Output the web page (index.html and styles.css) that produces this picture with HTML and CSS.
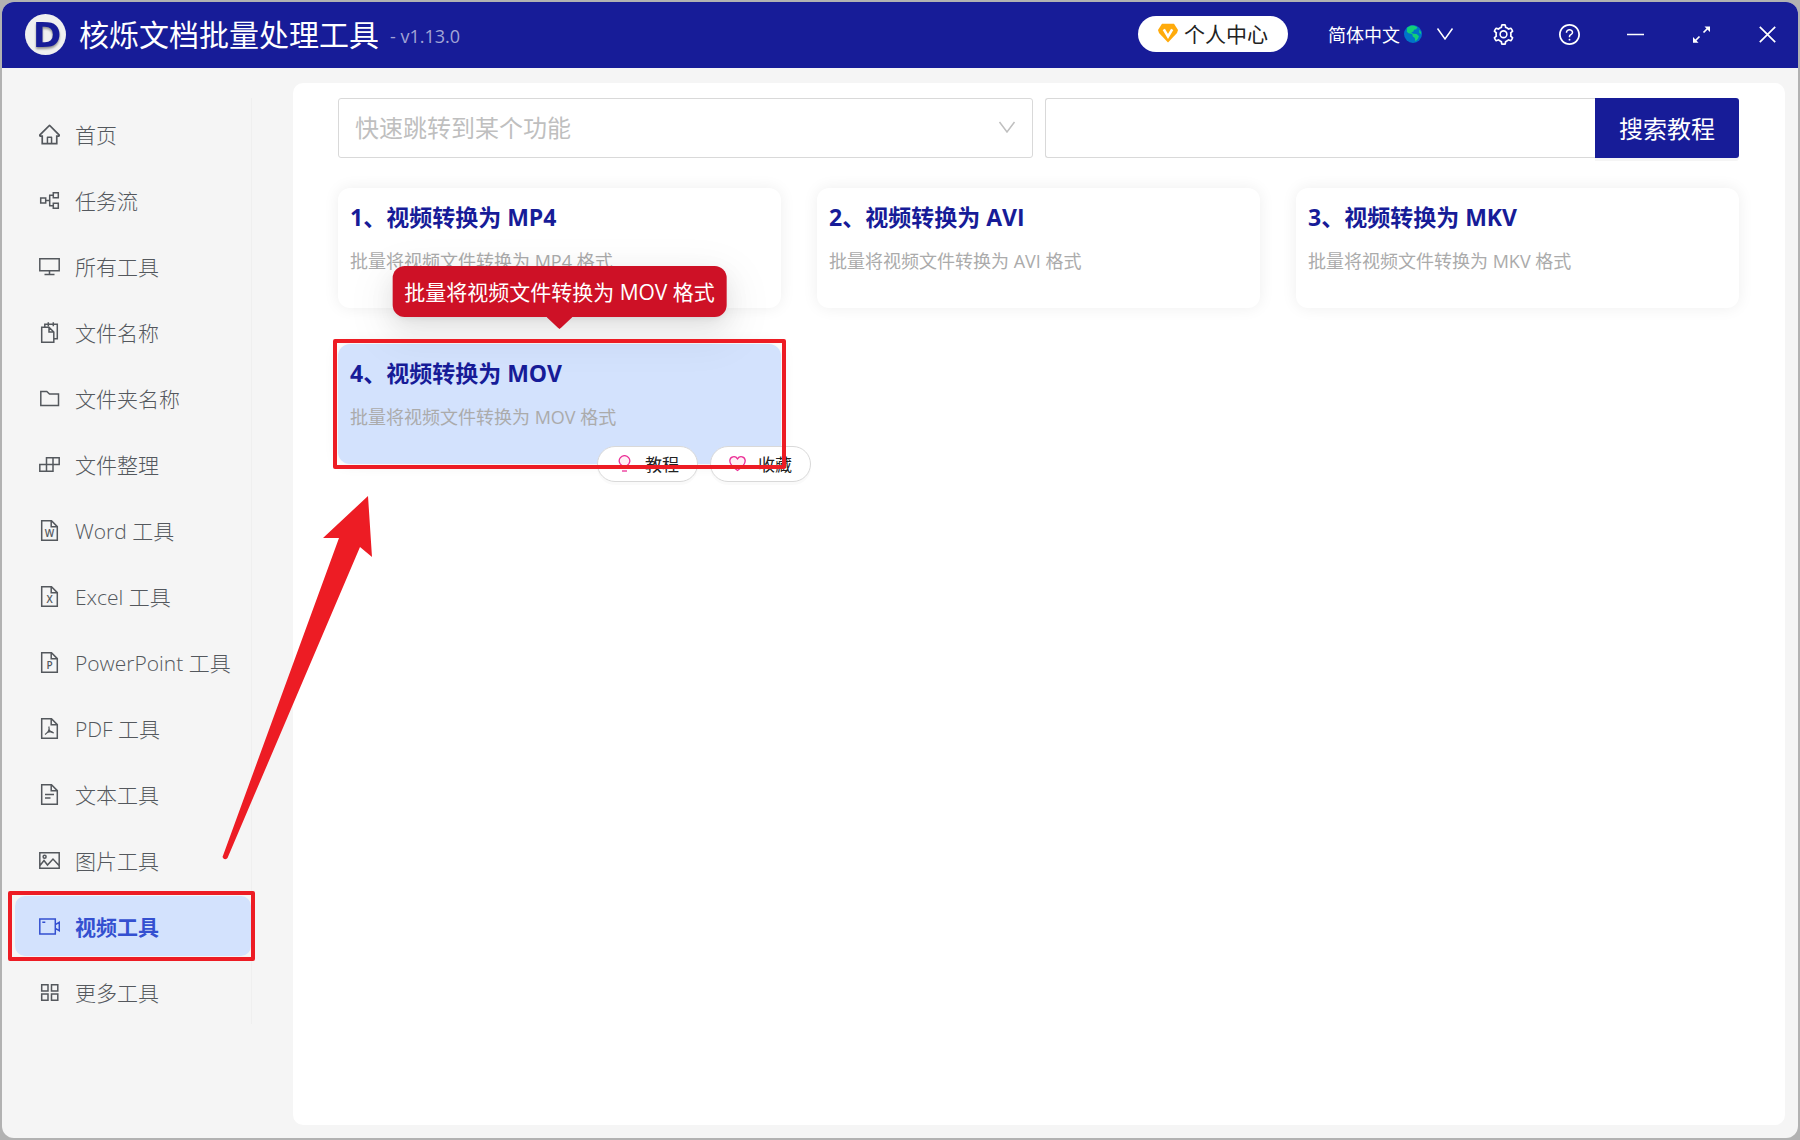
FILE: index.html
```html
<!DOCTYPE html>
<html lang="zh-CN">
<head>
    <meta charset="UTF-8">
    <title>核烁文档批量处理工具</title>
    <link rel="stylesheet" href="styles.css">
</head>
<body>
    <div class="window">
        <header class="titlebar">
            <svg class="logo" viewBox="0 0 41 41">
                <circle cx="20.5" cy="20.5" r="20.5" />
                <text x="22" y="33" text-anchor="middle">D</text>
            </svg>
            <h1>核烁文档批量处理工具</h1>
            <span class="version">- v1.13.0</span>
            <button class="user-center" type="button">
                <svg width="20" height="20" viewBox="0 0 20 20">
                    <path d="M4 .8h12L20 7l-1 3-9 9.6L1 10 0 7z" fill="#ffab0c" />
                    <path d="M5.8 6.4l4.2 7 4.2-7" fill="none" stroke="#fff" stroke-width="2.6" />
                </svg>
                个人中心
            </button>
            <button class="language" type="button">
                简体中文
                <svg class="globe" width="18" height="18" viewBox="0 0 18 18">
                    <circle cx="9" cy="9" r="9" fill="#0074c8" />
                    <path d="M3.2 2.6L7 .6l3.4.1 3 1.6-1.2 1.9-2.2.5-.6 1.8-2.2.9 2 1.4 3.4.3 2.4 2.2-1.2 2.6-2.4 2.6-.6-3.4-2-1.6-.6-2.4L4.6 8.2 2.8 6.8zM15.2 4.6l1.7 2.4.2 2-1.7-1z" fill="#12cf78" />
                </svg>
                <svg class="arrow-down" width="18" height="18" viewBox="0 0 18 18"><path d="M1.5 3.5L9 14l7.5-10.5" /></svg>
            </button>
            <div class="window-actions">
                <button type="button" aria-label="设置">
                    <svg viewBox="64 64 896 896" fill="currentColor"><path d="M924.8 625.7l-65.5-56c3.1-19 4.7-38.4 4.7-57.8s-1.6-38.8-4.7-57.8l65.5-56a32.03 32.03 0 009.3-35.2l-.9-2.6a443.74 443.74 0 00-79.7-137.9l-1.8-2.1a32.12 32.12 0 00-35.1-9.5l-81.3 28.9c-30-24.6-63.5-44-99.7-57.6l-15.7-85a32.05 32.05 0 00-25.8-25.7l-2.7-.5c-52.1-9.4-106.9-9.4-159 0l-2.7.5a32.05 32.05 0 00-25.8 25.7l-15.8 85.4a351.86 351.86 0 00-99 57.4l-81.9-29.1a32 32 0 00-35.1 9.5l-1.8 2.1a446.02 446.02 0 00-79.7 137.9l-.9 2.6c-4.5 12.5-.8 26.5 9.3 35.2l66.3 56.6c-3.1 18.8-4.6 38-4.6 57.1 0 19.2 1.5 38.4 4.6 57.1L99 625.5a32.03 32.03 0 00-9.3 35.2l.9 2.6c18.1 50.4 44.9 96.9 79.7 137.9l1.8 2.1a32.12 32.12 0 0035.1 9.5l81.9-29.1c29.8 24.5 63.1 43.9 99 57.4l15.8 85.4a32.05 32.05 0 0025.8 25.7l2.7.5a449.4 449.4 0 00159 0l2.7-.5a32.05 32.05 0 0025.8-25.7l15.7-85a350 350 0 0099.7-57.6l81.3 28.9a32 32 0 0035.1-9.5l1.8-2.1c34.8-41.1 61.6-87.5 79.7-137.9l.9-2.6c4.5-12.3.8-26.3-9.3-35zM788.3 465.9c2.5 15.1 3.8 30.6 3.8 46.1s-1.3 31-3.8 46.1l-6.6 40.1 74.7 63.9a370.03 370.03 0 01-42.6 73.6L721 702.8l-31.4 25.8c-23.9 19.6-50.5 35-79.3 45.8l-38.1 14.3-17.9 97a377.5 377.5 0 01-85 0l-17.9-97.2-37.8-14.5c-28.5-10.8-55-26.2-78.7-45.7l-31.4-25.9-93.4 33.2c-17-22.9-31.2-47.6-42.6-73.6l75.5-64.5-6.5-40c-2.4-14.9-3.7-30.3-3.7-45.5 0-15.3 1.2-30.6 3.7-45.5l6.5-40-75.5-64.5c11.3-26.1 25.6-50.7 42.6-73.6l93.4 33.2 31.4-25.9c23.7-19.5 50.2-34.9 78.7-45.7l37.9-14.3 17.9-97.2c28.1-3.2 56.8-3.2 85 0l17.9 97 38.1 14.3c28.7 10.8 55.4 26.2 79.3 45.8l31.4 25.8 92.8-32.9c17 22.9 31.2 47.6 42.6 73.6L781.8 426l6.5 39.9z" /><circle cx="512" cy="502" r="144" fill="none" stroke="currentColor" stroke-width="66" /></svg>
                </button>
                <button type="button" aria-label="帮助">
                    <svg viewBox="64 64 896 896" fill="currentColor"><path d="M512 64C264.6 64 64 264.6 64 512s200.6 448 448 448 448-200.6 448-448S759.4 64 512 64zm0 820c-205.4 0-372-166.6-372-372s166.6-372 372-372 372 166.6 372 372-166.6 372-372 372z" /><path d="M623.6 316.7C593.6 290.4 554 276 512 276s-81.6 14.5-111.6 40.7C369.2 344 352 380.7 352 420v7.6c0 4.4 3.6 8 8 8h48c4.4 0 8-3.6 8-8V420c0-44.1 43.1-80 96-80s96 35.9 96 80c0 31.1-22 59.6-56.1 72.7-21.2 8.1-39.2 22.3-52.1 40.9-13.1 19-19.9 41.8-19.9 64.9V620c0 4.4 3.6 8 8 8h48c4.4 0 8-3.6 8-8v-22.7a48.3 48.3 0 0130.9-44.8c59-22.7 97.1-74.7 97.1-132.5.1-39.3-17.1-76-48.3-103.3zM472 732a40 40 0 1080 0 40 40 0 10-80 0z" /></svg>
                </button>
                <button type="button" aria-label="最小化">
                    <svg class="line" viewBox="0 0 21 21"><path d="M2 10.5h17" /></svg>
                </button>
                <button type="button" aria-label="最大化">
                    <svg class="line" viewBox="0 0 21 21"><path d="M12.5 8.5l5-5M8.5 12.5l-5 5" /><path d="M13.5 2.5H19V8zM2 13v5.8h5.5z" fill="currentColor" stroke="none" /></svg>
                </button>
                <button type="button" aria-label="关闭">
                    <svg class="line" viewBox="0 0 21 21"><path d="M2.8 2.8l15.4 15.4M18.2 2.8L2.8 18.2" /></svg>
                </button>
            </div>
        </header>

        <div class="body">
            <nav class="sidebar">
                <a href="#" class="menu-item">
                    <svg viewBox="64 64 896 896"><path class="solid" d="M946.5 505L560.1 118.8l-25.9-25.9a31.5 31.5 0 00-44.4 0L77.5 505a63.9 63.9 0 00-18.8 46c.4 35.2 29.7 63.3 64.9 63.3h42.5V940h691.8V614.3h43.4c17.1 0 33.2-6.7 45.3-18.8a63.6 63.6 0 0018.7-45.3c0-17-6.7-33.1-18.8-45.2zM568 868H456V664h112v204zm217.9-325.7V868H632V640c0-22.1-17.9-40-40-40H432c-22.1 0-40 17.9-40 40v228H238.1V542.3h-96l370-369.7 23.1 23.1L882 542.3h-96.1z" /></svg>
                    首页
                </a>
                <a href="#" class="menu-item">
                    <svg viewBox="0 0 21 21"><path d="M1.7 8h5v5h-5zM14.3 2.8h5v5h-5zM14.3 13.3h5v5h-5zM6.7 10.5h4M14.3 5.3h-3.6v10.5h3.6" /></svg>
                    任务流
                </a>
                <a href="#" class="menu-item">
                    <svg viewBox="0 0 21 21"><path d="M.8 2.800h19.400v12H.8zM10.500 14.800v3.500M5.500 18.500h10" /></svg>
                    所有工具
                </a>
                <a href="#" class="menu-item">
                    <svg viewBox="0 0 21 21"><path d="M2.7 5.200H10l4.800 4.800v10.200H2.700zM10 5.200V10h4.800M5.800 5V2.300h12.500v14.500h-3.500M9.300.3v4M14.300.3v4" /></svg>
                    文件名称
                </a>
                <a href="#" class="menu-item">
                    <svg viewBox="0 0 21 21"><path d="M1.8 3.500h6L10.500 6h9v11.500H1.800z" /></svg>
                    文件夹名称
                </a>
                <a href="#" class="menu-item">
                    <svg viewBox="0 0 21 21"><path d="M7.5 3.800h12.700v6.700H7.500zM.8 10.500H14v6.700H.8zM14 3.800v6.700M7.500 10.500v6.700" /></svg>
                    文件整理
                </a>
                <a href="#" class="menu-item">
                    <svg viewBox="0 0 21 21"><path d="M2.7.8h9.800l5.800 5.800v13.600H2.700zM12.200.8v6h6" /><text x="10.5" y="17" text-anchor="middle">W</text></svg>
                    Word 工具
                </a>
                <a href="#" class="menu-item">
                    <svg viewBox="0 0 21 21"><path d="M2.7.8h9.800l5.800 5.800v13.600H2.700zM12.200.8v6h6" /><text x="10.5" y="17" text-anchor="middle">X</text></svg>
                    Excel 工具
                </a>
                <a href="#" class="menu-item">
                    <svg viewBox="0 0 21 21"><path d="M2.7.8h9.800l5.800 5.800v13.600H2.700zM12.200.8v6h6" /><text x="10.5" y="17" text-anchor="middle">P</text></svg>
                    PowerPoint 工具
                </a>
                <a href="#" class="menu-item">
                    <svg viewBox="0 0 21 21"><path d="M2.7.8h9.800l5.800 5.800v13.600H2.700zM12.200.8v6h6" /><path class="thin" d="M9.8 8.500c1 3-.8 6-3.800 8M10 11.500c.6 1.800 2.200 3 4.800 3.300M7.500 14.800c2-1 4-1.300 6-1.200" /></svg>
                    PDF 工具
                </a>
                <a href="#" class="menu-item">
                    <svg viewBox="0 0 21 21"><path d="M2.7.8h9.800l5.800 5.800v13.600H2.700zM12.200.8v6h6M6 10.500h9M6 14h5.500" /></svg>
                    文本工具
                </a>
                <a href="#" class="menu-item">
                    <svg viewBox="0 0 21 21"><path d="M.8 2.800h19.400v15.500H.8zM1 15.500l4-5 3.500 4.500L14 9l6 6.500" /><circle cx="5.6" cy="6.8" r="1.5" /></svg>
                    图片工具
                </a>
                <a href="#" class="menu-item active">
                    <svg viewBox="0 0 21 21"><path d="M.8 3h15.500v15H.8zM3.300 6.300h3M16.300 8.700l4-2.400v8.400l-4-2.400" /></svg>
                    视频工具
                    <span class="mark"></span>
                </a>
                <a href="#" class="menu-item">
                    <svg viewBox="0 0 21 21"><path d="M2.7 2.700H9V9H2.700zM12.500 2.700h6.300V9h-6.300zM2.700 12H9v6.300H2.700zM12.500 12h6.300v6.300h-6.300z" /></svg>
                    更多工具
                </a>
            </nav>

            <main class="content">
                <div class="search-row">
                    <div class="select-box">
                        <select aria-label="快速跳转到某个功能">
                            <option>快速跳转到某个功能</option>
                        </select>
                        <svg class="arrow-down" width="18" height="18" viewBox="0 0 18 18"><path d="M1.5 4L9 14l7.500-10" /></svg>
                    </div>
                    <form class="search-box">
                        <input type="text" aria-label="搜索教程">
                        <button type="button">搜索教程</button>
                    </form>
                </div>

                <div class="cards">
                    <section class="card">
                        <h2>1、视频转换为 MP4</h2>
                        <p>批量将视频文件转换为 MP4 格式</p>
                    </section>
                    <section class="card">
                        <h2>2、视频转换为 AVI</h2>
                        <p>批量将视频文件转换为 AVI 格式</p>
                    </section>
                    <section class="card">
                        <h2>3、视频转换为 MKV</h2>
                        <p>批量将视频文件转换为 MKV 格式</p>
                    </section>
                    <section class="card active">
                        <h2>4、视频转换为 MOV</h2>
                        <p>批量将视频文件转换为 MOV 格式</p>
                        <div class="tooltip" role="tooltip">批量将视频文件转换为 MOV 格式</div>
                        <div class="card-actions">
                            <button type="button">
                                <svg viewBox="0 0 17 17"><path d="M6 12.800v-2.200A5.300 5.300 0 1 1 11 10.600v2.200z" /><path d="M6 16h5" /></svg>
                                教程
                            </button>
                            <button type="button">
                                <svg viewBox="0 0 17 17"><path d="M8.5 15.500C4 12.500.8 9.500.8 5.800.8 1.500 6.300.2 8.500 3.800c2.200-3.600 7.700-2.300 7.700 2 0 3.700-3.200 6.700-7.700 9.700z" /></svg>
                                收藏
                            </button>
                        </div>
                        <span class="mark"></span>
                    </section>
                </div>
            </main>
        </div>

        <!-- arrow from the menu item to the card -->
        <svg class="pointer" width="150" height="364" viewBox="222 496 150 364">
            <path d="M368 496l4 61-12-10L227.500 858q-3 3-5-1L339 538h-16z" />
        </svg>
    </div>
</body>
</html>
```
FILE: styles.css
```css
* {
    box-sizing: border-box;
}
body {
    margin: 0;
    padding: 2px;
    min-height: 100vh;
    display: flex;
    background-color: #b2b2b2;
    font-family: "Open Sans", "Noto Sans CJK SC", sans-serif;
    font-size: 21px;
    color: #222;
}
button, input, select {
    font: inherit;
    color: inherit;
    margin: 0;
}
button {
    display: flex;
    align-items: center;
    border: none;
    cursor: pointer;
}
h1, h2, p {
    margin: 0;
}
svg {
    flex: none;
}
.window {
    position: relative;
    flex: 1;
    display: flex;
    flex-direction: column;
    background-color: #f5f5f5;
    border-radius: 12px;
    overflow: hidden;
}

/* title bar */
.titlebar {
    display: flex;
    align-items: center;
    height: 66px;
    padding: 0 20px 2px 23px;
    background-color: #171c98;
    color: #fff;
}
.logo {
    width: 41px;
    height: 41px;
    margin-right: 13px;
    fill: #f0f0f0;
}
.logo text {
    font-family: "DejaVu Sans", sans-serif;
    font-size: 34px;
    font-weight: 700;
    fill: #171c98;
    filter: drop-shadow(0 2px 1px rgba(0, 0, 0, 0.4));
}
.titlebar h1 {
    padding-top: 2px;
    font-size: 30px;
    font-weight: 400;
    line-height: 40px;
}
.version {
    margin-left: 11px;
    padding-top: 4px;
    font-size: 18px;
    color: #a2a4d6;
}
.user-center {
    height: 36px;
    margin-left: auto;
    padding: 0 20px 2px;
    gap: 6px;
    border-radius: 18px;
    background-color: #fff;
    color: #222;
}
.language {
    margin: 0 39px 0 40px;
    padding: 0;
    background: none;
    font-size: 18px;
}
.globe {
    margin: 0 14px 0 4px;
}
.arrow-down {
    fill: none;
    stroke: currentColor;
    stroke-width: 1.5;
}
.window-actions {
    display: flex;
    gap: 45px;
}
.window-actions button {
    padding: 0;
    background: none;
}
.window-actions svg {
    width: 21px;
    height: 21px;
}
.window-actions .line {
    fill: none;
    stroke: currentColor;
    stroke-width: 1.7;
}

/* layout */
.body {
    flex: 1;
    display: flex;
    padding: 15px 13px 13px;
}
.sidebar {
    align-self: flex-start;
    width: 237px;
    margin: 15px 41px 0 0;
    padding: 6px 0 2px;
    display: flex;
    flex-direction: column;
    gap: 6px;
    border-right: 1px solid #efefef;
}
.content {
    flex: 1;
    padding: 15px 46px 15px 45px;
    background-color: #fff;
    border-radius: 10px;
}

/* menu */
.menu-item {
    position: relative;
    display: flex;
    align-items: center;
    gap: 15px;
    height: 60px;
    padding: 0 24px;
    border-radius: 10px;
    color: #54585d;
    font-weight: 300;
    text-decoration: none;
    white-space: nowrap;
}
.menu-item svg {
    width: 21px;
    height: 21px;
    fill: none;
    stroke: currentColor;
    stroke-width: 1.5;
}
.menu-item .solid {
    fill: currentColor;
    stroke: none;
}
.menu-item .thin {
    stroke-width: 1.2;
}
.menu-item text {
    font-size: 10px;
    font-weight: 600;
    fill: currentColor;
    stroke: none;
}
.menu-item.active {
    background-color: #d3e2fd;
    color: #3450d0;
    font-weight: 700;
}

/* search */
.search-row {
    display: grid;
    grid-template-columns: 1fr 1fr;
    gap: 12px;
}
.select-box {
    display: flex;
    align-items: center;
    height: 60px;
    padding: 0 16px 2px;
    border: 1px solid #d9d9d9;
    border-radius: 3px;
    color: #bfbfbf;
    font-size: 24px;
}
.select-box select {
    flex: 1;
    padding: 0;
    border: none;
    background: none;
    appearance: none;
    outline: none;
}
.search-box {
    display: flex;
    height: 60px;
    font-size: 24px;
}
.search-box input {
    flex: 1;
    min-width: 0;
    padding: 0 16px;
    border: 1px solid #d9d9d9;
    border-right: none;
    border-radius: 3px 0 0 3px;
    outline: none;
    color: #222;
}
.search-box button {
    padding: 0 24px 2px;
    border-radius: 0 3px 3px 0;
    background-color: #171c98;
    box-shadow: 0 3px 0 rgba(0, 0, 0, 0.04);
    color: #fff;
}

/* cards */
.cards {
    display: grid;
    grid-template-columns: repeat(3, 1fr);
    gap: 36px;
    margin-top: 30px;
}
.card {
    position: relative;
    min-height: 120px;
    padding: 12px;
    border-radius: 12px;
    background-color: #fff;
    box-shadow: 0 0 16px rgba(0, 0, 0, 0.07);
}
.card h2 {
    font-size: 23px;
    font-weight: 700;
    line-height: 34px;
    color: #171c98;
}
.card p {
    margin-top: 14px;
    font-size: 18px;
    line-height: 27px;
    color: #ababab;
}
.card.active {
    background-color: #d3e2fd;
}
.tooltip {
    position: absolute;
    bottom: calc(100% + 27px);
    left: 50%;
    transform: translateX(-50%);
    padding: 10px 12px 8px;
    border-radius: 12px;
    background-color: #ce1126;
    box-shadow: 0 5px 9px -6px rgba(0, 0, 0, 0.12), 0 9px 24px rgba(0, 0, 0, 0.08), 0 14px 42px 12px rgba(0, 0, 0, 0.05);
    color: #fff;
    line-height: 33px;
    white-space: nowrap;
}
.tooltip::after {
    content: "";
    position: absolute;
    top: 100%;
    left: 50%;
    width: 26px;
    height: 12px;
    margin-left: -13px;
    background-color: #ce1126;
    clip-path: polygon(0 0, 100% 0, 58% 85%, 50% 100%, 42% 85%);
}
.card-actions {
    position: absolute;
    right: -30px;
    bottom: -18px;
    display: flex;
    gap: 12px;
}
.card-actions button {
    height: 36px;
    padding: 0 18px 2px;
    gap: 12px;
    border: 1px solid #d9d9d9;
    border-radius: 18px;
    background-color: #fff;
    box-shadow: 0 3px 0 rgba(0, 0, 0, 0.02);
    font-size: 17px;
    white-space: nowrap;
}
.card-actions svg {
    width: 17px;
    height: 17px;
    fill: #fff0f6;
    stroke: #eb2f96;
    stroke-width: 1.3;
}

/* red highlight frames and arrow */
.mark {
    position: absolute;
    inset: -5px;
    border: 4px solid #ed1c24;
    border-radius: 2px;
    pointer-events: none;
}
.menu-item .mark {
    inset: -5px -4px -5px -7px;
}
.pointer {
    position: absolute;
    left: 220px;
    top: 494px;
    fill: #ed1c24;
    pointer-events: none;
}
```
